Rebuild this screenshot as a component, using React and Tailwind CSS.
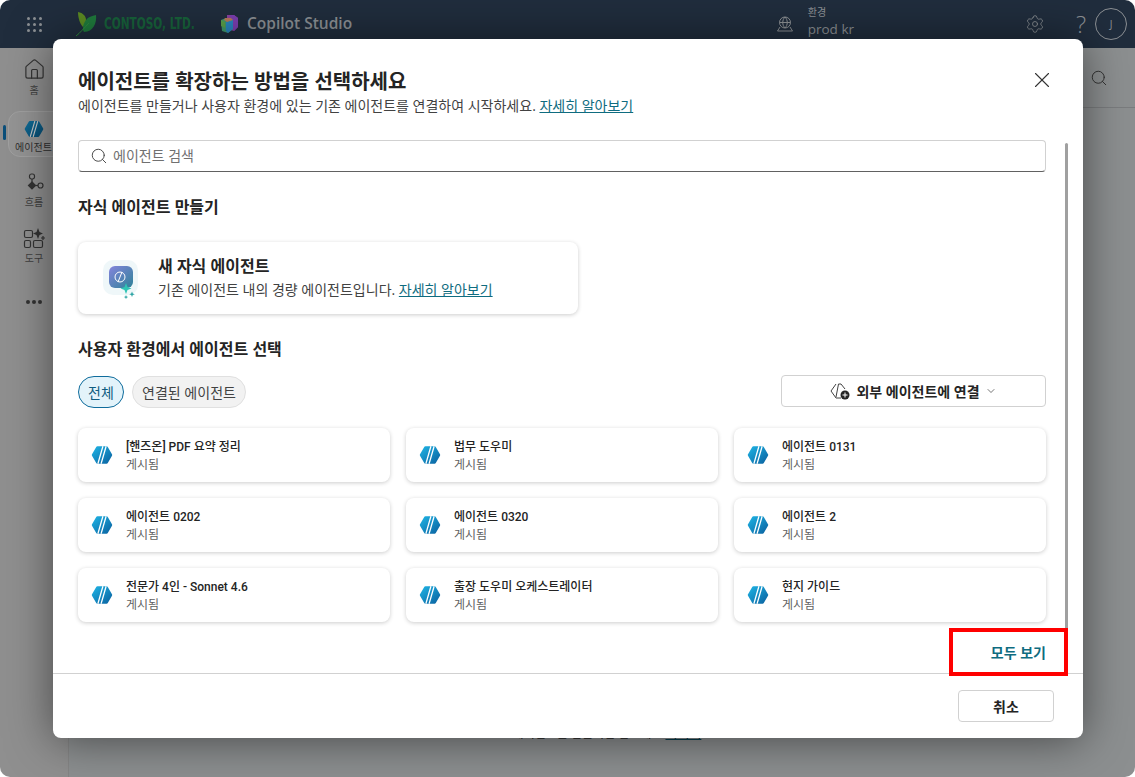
import React from 'react';
import { House, Settings, Search, X, ChevronDown } from 'lucide-react';

const KR = "font-['Open_Sans','Noto_Sans_CJK_KR',sans-serif]";

const AGENTS = [
  '[핸즈온] PDF 요약 정리', '법무 도우미', '에이전트 0131',
  '에이전트 0202', '에이전트 0320', '에이전트 2',
  '전문가 4인 - Sonnet 4.6', '출장 도우미 오케스트레이터', '현지 가이드',
];

function AgentIcon({ size = 22, dim = false }) {
  const id = dim ? 'hexd' : 'hex';
  return (
    <svg width={size} height={size} viewBox="0 0 24 24">
      <defs>
        <linearGradient id={id} x1="0" y1="0" x2="1" y2="1">
          <stop offset="0" stopColor={dim ? '#0f6f9a' : '#1fb6e6'} />
          <stop offset="1" stopColor={dim ? '#084a70' : '#0a5f9e'} />
        </linearGradient>
      </defs>
      <path d="M7 2.500h10a1.500 1.500 0 0 1 1.300.8l4.600 7.900a1.500 1.500 0 0 1 0 1.600l-4.600 7.900a1.500 1.500 0 0 1-1.300.8H7a1.500 1.500 0 0 1-1.300-.8l-4.600-7.900a1.500 1.500 0 0 1 0-1.600l4.600-7.900A1.500 1.500 0 0 1 7 2.500z" fill={`url(#${id})`} />
      <path d="M13 2.500 7.500 21.500M16.500 2.500 11 21.500" stroke={dim ? '#c8c8c8' : '#fff'} strokeWidth="1.400" />
    </svg>
  );
}

function LeafLogo() {
  return (
    <svg width="21" height="25" viewBox="0 0 21 25">
      <path d="M2 0c5 1 8 4 8 8 0 3-1 5-3 7C4 12 2 6 2 0z" fill="#5b8a22" />
      <path d="M20 3c1 8-3 17-12 17-2-3-1-8 2-12 2-3 6-4 10-5z" fill="#1f7a3c" />
      <path d="M0 24c4-3 8-8 13-13" stroke="#2f8a3c" strokeWidth="1" fill="none" />
    </svg>
  );
}

function CopilotLogo() {
  return (
    <svg width="18" height="18" viewBox="0 0 18 18">
      <path d="M7 0h7l4 3v9l-4 4-7-2z" fill="#8a3f9e" />
      <path d="M10 0h4l4 3v9l-4 4z" fill="#7b3fb0" />
      <path d="M1 5l5-2 7 2v9l-5 4-6-2z" fill="#3f9a6e" />
      <path d="M6 7l7-2v9l-5 4-2-2z" fill="#2a86c0" />
      <path d="M5 3l6 0 2 2-6 2-3-2z" fill="#b57a5a" />
      <path d="M1 5l4 2v6l-4-2z" fill="#5aa04a" />
    </svg>
  );
}

function Header() {
  return (
    <header className="h-12 flex items-center bg-[#202d3d] text-[#8c9094] rounded-t-[10px] shrink-0">
      <div className="w-[68px] flex justify-center">
        <div className="grid grid-cols-3 gap-[3px] w-[15px]">
          {Array.from({ length: 9 }).map((_, i) => (
            <span key={i} className="w-[3px] h-[3px] bg-[#8c9094] rounded-full" />
          ))}
        </div>
      </div>
      <div className="ml-2 flex items-center gap-[7px]">
        <LeafLogo />
        <span className="w-[92px] whitespace-nowrap text-[#17613a] text-[16px] font-bold origin-left scale-x-[0.66] font-['DejaVu_Sans','Liberation_Sans',sans-serif]">CONTOSO, LTD.</span>
      </div>
      <div className="ml-[24px] flex items-center gap-[9px]">
        <CopilotLogo />
        <span className="text-[15.500px] font-semibold">Copilot Studio</span>
      </div>
      <div className="ml-auto flex items-center">
        <svg width="18" height="18" viewBox="0 0 18 18" fill="none" stroke="#8c9094" strokeWidth="1">
          <circle cx="9" cy="7.500" r="5.500" />
          <path d="M3.500 7.500h11M9 2c-3 3-3 8 0 11M9 2c3 3 3 8 0 11M4 12l-2.500 4h15L14 12" />
        </svg>
        <div className="ml-[14px] mr-[281px] flex flex-col -mt-[5px]">
          <span className="text-[10px] leading-[14px]">환경</span>
          <span className="text-[13.500px] leading-[18px] mt-[1px]">prod kr</span>
        </div>
      </div>
      <Settings size={20} strokeWidth={1} className="absolute left-[1025px] top-[14px]" />
      <span className="absolute left-[1076px] top-[9px] text-[24px] font-light leading-[30px]">?</span>
      <div className="absolute left-[1095px] top-2 w-8 h-8 rounded-full border border-[#8c9094] flex items-center justify-center text-[10px]">J</div>
    </header>
  );
}

function NavItem({ label, children, className }) {
  return (
    <div className={`flex flex-col items-center gap-[2px] ${className}`}>
      {children}
      <span className="text-[10px] leading-[14px] text-[#3f3f3f]">{label}</span>
    </div>
  );
}

function Sidebar() {
  return (
    <aside className="w-[69px] shrink-0 bg-[#8f8f8f] border-r border-[#858585] rounded-bl-[10px] relative flex flex-col items-center pt-[10px]">
      <NavItem label="홈" className="w-full">
        <House size={23} strokeWidth={1.250} className="text-[#333]" />
      </NavItem>
      <div className="absolute left-[3px] top-[77px] w-[3px] h-[15px] bg-[#0b4f7a] rounded-sm" />
      <div className="mt-[14px] ml-2 w-[61px] h-[46px] shrink-0 rounded-xl bg-[#949494] border border-[#a0a0a0] flex flex-col items-center pt-[7px] pr-[9px]">
        <AgentIcon size={20} dim />
        <span className="text-[10px] leading-[14px] text-[#2f2f2f] mt-[1px] whitespace-nowrap">에이전트</span>
      </div>
      <NavItem label="흐름" className="mt-[16px]">
        <svg width="20" height="20" viewBox="0 0 20 20" fill="none" stroke="#333" strokeWidth="1.200">
          <rect x="5.500" y="1" width="5" height="5" rx="2" />
          <path d="M8 6v3" />
          <path d="M8 9l3.500 3.500L8 16l-3.500-3.500z" fill="#333" />
          <path d="M11.500 12.500H14" />
          <rect x="14" y="10" width="5" height="5" rx="2.500" />
        </svg>
      </NavItem>
      <NavItem label="도구" className="mt-[18px]">
        <svg width="22" height="22" viewBox="0 0 22 22" fill="none" stroke="#333" strokeWidth="1.200">
          <rect x="1.500" y="3.500" width="8" height="7" rx="1.500" />
          <rect x="1.500" y="13.500" width="6" height="7" rx="1.500" />
          <rect x="10.500" y="13.500" width="9" height="7" rx="1.500" />
          <path d="M15 1l1.500 4 3.500 1.500-3.500 1.500L15 12l-1.500-4L10 6.500l3.500-1.500z" fill="#333" stroke="none" />
          <path d="M20 9v4M18 11h4" />
        </svg>
      </NavItem>
      <div className="mt-[35px] flex gap-[2.500px]">
        <span className="w-[3.500px] h-[3.500px] rounded-full bg-[#333]" />
        <span className="w-[3.500px] h-[3.500px] rounded-full bg-[#333]" />
        <span className="w-[3.500px] h-[3.500px] rounded-full bg-[#333]" />
      </div>
    </aside>
  );
}

function AgentCard({ name }) {
  return (
    <div className="h-[54px] bg-white rounded-lg shadow-[0_1px_4px_rgba(0,0,0,0.2)] flex items-center pl-[13px]">
      <AgentIcon size={22} />
      <div className="ml-[13px] pt-[1px] flex flex-col">
        <span className="text-[12px] leading-[18px] font-medium text-[#242424] font-['Roboto','Noto_Sans_CJK_KR',sans-serif]">{name}</span>
        <span className="text-[12px] leading-[18px] text-[#616161]">게시됨</span>
      </div>
    </div>
  );
}

function ChildAgentIcon() {
  return (
    <svg width="40" height="42" viewBox="0 0 40 42">
      <defs>
        <linearGradient id="child" x1="0" y1="0" x2="1" y2="1">
          <stop offset="0" stopColor="#8484dc" />
          <stop offset="1" stopColor="#2f8298" />
        </linearGradient>
      </defs>
      <rect x="0" y="3" width="35" height="35" rx="10" fill="#eff7f9" />
      <rect x="6" y="9" width="24" height="22" rx="6" fill="url(#child)" />
      <circle cx="17" cy="20" r="5" fill="none" stroke="#fff" strokeWidth="1" />
      <path d="M19 15l-4 10" stroke="#fff" strokeWidth="1" />
      <path d="M23 26l1.500 4 4 1.500-4 1.500-1.500 4-1.500-4-4-1.500 4-1.500z" fill="#2fc5b5" />
      <path d="M29 34.500l.8 2 2 .8-2 .8-.8 2-.8-2-2-.8 2-.8zM23 38l.6 1.500 1.500.6-1.500.6-.6 1.500-.6-1.500-1.500-.6 1.500-.6z" fill="#2fa5a5" />
    </svg>
  );
}

function Dialog() {
  return (
    <div className="absolute left-[53px] top-[39px] w-[1030px] h-[699px] bg-white rounded-lg shadow-[0_2px_45px_rgba(0,0,0,0.5)] flex flex-col">
      <X size={26} strokeWidth={1} className="absolute left-[976px] top-[28px] text-[#333]" />
      <div className="pl-[25px] pr-[37px] pt-[29px]">
        <h1 className="text-[20px] leading-[28px] font-semibold text-[#242424]">에이전트를 확장하는 방법을 선택하세요</h1>
        <p className="text-[14px] leading-[20px] text-[#424242]">
          에이전트를 만들거나 사용자 환경에 있는 기존 에이전트를 연결하여 시작하세요.{' '}
          <span className="text-[#0f6c80] underline">자세히 알아보기</span>
        </p>
        <div className="mt-[24px] h-8 rounded border border-[#d1d1d1] border-b-[#616161] flex items-center pl-[11px]">
          <Search size={18} strokeWidth={1.250} className="text-[#424242]" />
          <span className="ml-[5px] text-[14px] leading-[18px] -mt-[1px] text-[#707070]">에이전트 검색</span>
        </div>
        <h2 className="mt-[23px] text-[16px] leading-[24px] font-semibold text-[#242424]">자식 에이전트 만들기</h2>
        <div className="mt-[23px] w-[500px] h-[72px] bg-white rounded-lg shadow-[0_1px_4px_rgba(0,0,0,0.2)] flex items-center pl-[25px]">
          <ChildAgentIcon />
          <div className="ml-[15px] flex flex-col">
            <span className="text-[16px] leading-[22px] font-semibold text-[#242424]">새 자식 에이전트</span>
            <span className="text-[14px] leading-[24px] text-[#424242] pt-[1px]">
              기존 에이전트 내의 경량 에이전트입니다. <span className="text-[#0f6c80] underline">자세히 알아보기</span>
            </span>
          </div>
        </div>
        <h2 className="mt-[23px] text-[16px] leading-[24px] font-semibold text-[#242424]">사용자 환경에서 에이전트 선택</h2>
        <div className="mt-[14px] flex items-start justify-between h-[33px]">
          <div className="flex gap-2 pt-[1px]">
            <span className="h-8 w-[46px] rounded-full border border-[#0f6c9c] bg-[#e3f3fa] text-[#0f5c80] text-[14px] flex items-center justify-center">전체</span>
            <span className="h-8 w-[114px] rounded-full border border-[#e0e0e0] bg-[#f2f2f2] text-[#424242] text-[14px] flex items-center justify-center">연결된 에이전트</span>
          </div>
          <div className="w-[265px] h-8 rounded border border-[#d1d1d1] flex items-center justify-center">
            <svg width="20" height="20" viewBox="0 0 20 20" fill="none" stroke="#424242" strokeWidth="1">
              <path d="M6 3L1 10l5 7h5" />
              <path d="M11 3H8.500L6 16" />
              <path d="M11 3l4 5" />
              <circle cx="15" cy="14" r="4.500" fill="#242424" stroke="none" />
              <path d="M15 11.500v5M12.500 14h5" stroke="#fff" />
            </svg>
            <span className="ml-[6px] text-[14px] font-semibold text-[#242424]">외부 에이전트에 연결</span>
            <ChevronDown size={12} strokeWidth={1.250} className="ml-[5px] text-[#242424]" />
          </div>
        </div>
        <div className="mt-[20px] grid grid-cols-3 gap-x-4 gap-y-4">
          {AGENTS.map((name) => <AgentCard key={name} name={name} />)}
        </div>
        <div className="mt-[20px] h-5 flex justify-end items-center">
          <span className="text-[14px] font-semibold text-[#0f6c80]">모두 보기</span>
        </div>
      </div>
      <div className="mt-[11px] border-t border-[#d1d1d1] pt-[16px] pr-[29px] flex justify-end">
        <button className="w-24 h-8 rounded border border-[#d1d1d1] bg-white text-[14px] font-semibold text-[#242424]">취소</button>
      </div>
      {/* scrollbar + red callout sit over the dialog */}
      <div className="absolute left-[1012px] top-[104px] w-[3px] h-[490px] bg-[#a0a0a0] rounded-full" />
      <div className="absolute left-[896px] top-[589px] w-[119px] h-[48px] border-[4px] border-[#ff0000]" />
    </div>
  );
}

export default function App() {
  return (
    <div className={`relative w-[1135px] h-[777px] overflow-hidden bg-white flex flex-col ${KR}`}>
      <Header />
      <div className="flex flex-1 min-h-0">
        <Sidebar />
        <main className="flex-1 bg-[#8c8f90] rounded-br-[10px] flex flex-col">
          <div className="h-[60px] border-b border-[#7a7c7e] flex items-center justify-end pr-[27px] shrink-0">
            <Search size={18} strokeWidth={1.250} className="text-[#2f2f2f]" />
          </div>
          <p className="mt-[617px] text-center text-[12px] leading-4 text-[#222] pl-[10px]">
            에이전트를 만들려면 만드세요 <span className="text-[#063b4c] underline text-[13px]">여기서</span>
          </p>
        </main>
      </div>
      <Dialog />
    </div>
  );
}
